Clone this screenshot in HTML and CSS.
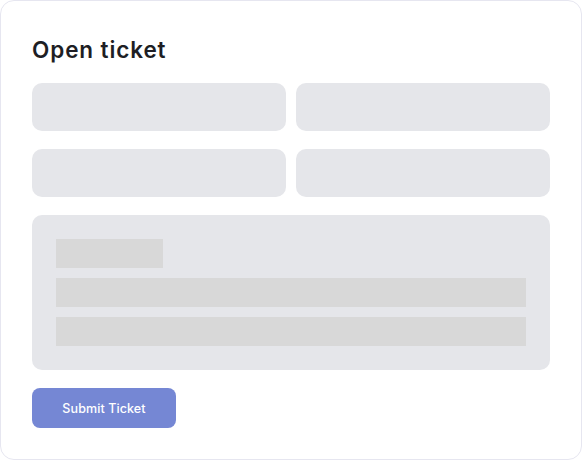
FILE: index.html
```html
<!DOCTYPE html>
<html lang="en">
<head>
<meta charset="utf-8">
<title>Open ticket</title>
<link rel="stylesheet" href="styles.css">
</head>
<body>
<div class="card">
  <h1 class="title">Open ticket</h1>
  <div class="fields">
    <div class="field"></div>
    <div class="field"></div>
    <div class="field"></div>
    <div class="field"></div>
  </div>
  <div class="textarea">
    <div class="bar bar-short"></div>
    <div class="bar"></div>
    <div class="bar"></div>
  </div>
  <button class="submit" type="button">Submit Ticket</button>
</div>
</body>
</html>
```
FILE: styles.css
```css
html, body {
  margin: 0;
  padding: 0;
  background: #ffffff;
}
.card {
  box-sizing: border-box;
  width: 582px;
  height: 460px;
  border: 1px solid #e6e6f0;
  border-radius: 14px;
  padding: 31px;
  background: #ffffff;
  font-family: Inter, "Noto Sans", sans-serif;
}
.title {
  margin: 0 0 15px 0;
  font-size: 22.5px;
  line-height: 36px;
  font-weight: 600;
  color: #1e1e24;
  letter-spacing: 0.9px;
}
.fields {
  display: grid;
  grid-template-columns: 1fr 1fr;
  column-gap: 10px;
  row-gap: 18px;
}
.field {
  height: 48px;
  border-radius: 10px;
  background: #e5e6ea;
}
.textarea {
  margin-top: 18px;
  background: #e5e6ea;
  border-radius: 10px;
  padding: 24px;
  display: flex;
  flex-direction: column;
  gap: 10px;
}
.bar {
  height: 29px;
  background: #d8d8d8;
}
.bar-short {
  width: 107px;
}
.submit {
  margin-top: 18px;
  width: 144px;
  height: 40px;
  border: none;
  border-radius: 8px;
  background: #7587d4;
  color: #ffffff;
  font-family: Inter, "Noto Sans", sans-serif;
  font-size: 12.5px;
  font-weight: 500;
  letter-spacing: 0.1px;
  padding: 0;
  display: block;
}
```
